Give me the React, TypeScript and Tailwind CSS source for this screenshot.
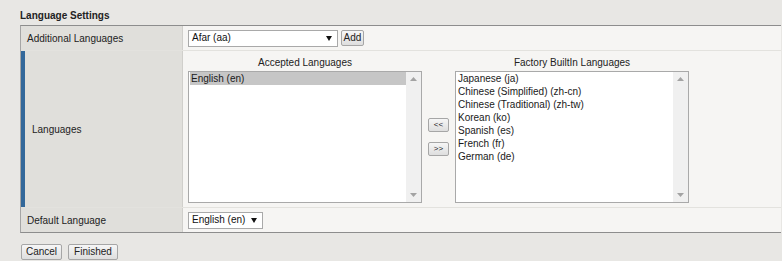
const accepted = ["English (en)"];
const factory = [
  "Japanese (ja)",
  "Chinese (Simplified) (zh-cn)",
  "Chinese (Traditional) (zh-tw)",
  "Korean (ko)",
  "Spanish (es)",
  "French (fr)",
  "German (de)",
];

function Caret() {
  return (
    <svg width="6" height="5" viewBox="0 0 6 5" className="shrink-0">
      <path d="M0 0 H6 L3 5 Z" fill="#111" />
    </svg>
  );
}

function Select({ value, width }: { value: string; width: string }) {
  return (
    <div
      className={`${width} h-[17px] bg-white border border-[#a9a9a9] flex items-center justify-between pl-[3px] pr-[5px] text-[10px] leading-[12px] text-[#111]`}
    >
      <span>{value}</span>
      <Caret />
    </div>
  );
}

function Btn({ label, width, small }: { label: string; width: string; small?: boolean }) {
  return (
    <button
      className={`${width} ${small ? "h-[14px] text-[8px]" : "h-[16px] text-[10px]"} leading-[12px] flex items-center justify-center border border-[#a6a6a6] rounded-[2px] bg-gradient-to-b from-[#f6f6f6] to-[#dedede] text-[#222]`}
    >
      {label}
    </button>
  );
}

function ListBox({ items, selected }: { items: string[]; selected?: string }) {
  return (
    <div className="w-[234px] h-[132px] bg-white border border-[#a9a9a9] flex">
      <div className="flex-1 flex flex-col pl-[1px]">
        {items.map((it) => (
          <div
            key={it}
            className={`h-[13px] pl-[1px] text-[10px] leading-[13px] text-[#1a1a1a] ${it === selected ? "bg-[#c6c6c6]" : ""}`}
          >
            {it}
          </div>
        ))}
      </div>
      <div className="w-[15px] bg-[#f0f0f0] flex flex-col items-center justify-between py-[5px]">
        <svg width="7" height="4" viewBox="0 0 7 4">
          <path d="M0 4 L3.5 0 L7 4 Z" fill="#a3a3a3" />
        </svg>
        <svg width="7" height="4" viewBox="0 0 7 4">
          <path d="M0 0 L3.5 4 L7 0 Z" fill="#a3a3a3" />
        </svg>
      </div>
    </div>
  );
}

export default function App() {
  return (
    <div className="w-[782px] h-[261px] bg-[#e8e7e4] font-['Liberation_Sans',Arial,sans-serif] text-[#222] overflow-hidden">
      <div className="h-[25px] pl-[20px] pt-[10px] text-[10px] leading-[12px] font-bold text-[#222]">
        Language Settings
      </div>

      <div className="ml-[20px] w-[761px] border-t border-b border-l border-t-[#8d8d8d] border-b-[#8d8d8d] border-l-[#a5a5a5] bg-[#f6f5f3]">
        {/* Additional Languages */}
        <div className="flex h-[25px] border-b border-[#e3e2de]">
          <div className="w-[162px] shrink-0 bg-[#e0dfdb] border-r border-[#d0cfcb] flex items-center pl-[6px] text-[10px]">
            Additional Languages
          </div>
          <div className="flex items-center gap-[3px] pl-[5px]">
            <Select value="Afar (aa)" width="w-[150px]" />
            <Btn label="Add" width="w-[23px]" />
          </div>
        </div>

        {/* Languages */}
        <div className="flex h-[157px] border-b border-[#e3e2de]">
          <div className="w-[162px] shrink-0 bg-[#e0dfdb] border-r border-[#d0cfcb] flex">
            <div className="w-[4px] bg-[#33689a]" />
            <div className="flex items-center pl-[7px] text-[10px]">Languages</div>
          </div>
          <div className="flex items-end gap-[6px] pl-[5px] pb-[4px]">
            <div className="flex flex-col items-center gap-[2px]">
              <div className="text-[10px] leading-[12px] text-[#222]">Accepted Languages</div>
              <ListBox items={accepted} selected="English (en)" />
            </div>
            <div className="h-[132px] flex flex-col justify-center gap-[10px]">
              <Btn label="<<" width="w-[21px]" small />
              <Btn label=">>" width="w-[21px]" small />
            </div>
            <div className="flex flex-col items-center gap-[2px]">
              <div className="text-[10px] leading-[12px] text-[#222]">Factory BuiltIn Languages</div>
              <ListBox items={factory} />
            </div>
          </div>
        </div>

        {/* Default Language */}
        <div className="flex h-[24px]">
          <div className="w-[162px] shrink-0 bg-[#e0dfdb] border-r border-[#d0cfcb] flex items-center pl-[6px] text-[10px]">
            Default Language
          </div>
          <div className="flex items-center pl-[5px]">
            <Select value="English (en)" width="w-[75px]" />
          </div>
        </div>
      </div>

      <div className="flex gap-[6px] pl-[21px] pt-[11px]">
        <Btn label="Cancel" width="w-[41px]" />
        <Btn label="Finished" width="w-[50px]" />
      </div>
    </div>
  );
}
